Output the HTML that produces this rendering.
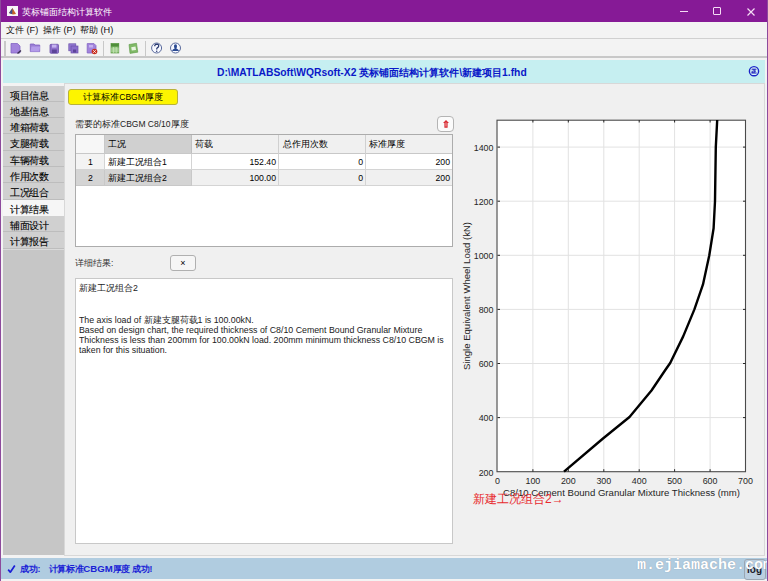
<!DOCTYPE html>
<html><head><meta charset="utf-8">
<style>
*{margin:0;padding:0;box-sizing:border-box}
html,body{width:768px;height:581px;overflow:hidden;background:#f0f0f0;font-family:"Liberation Sans",sans-serif;font-size:11px;color:#000}
.a{position:absolute;white-space:nowrap}
#win{position:absolute;left:0;top:0;width:768px;height:581px;background:#f3f3f3}
#bl{left:0;top:0;width:1px;height:581px;background:#8d4a9c}
#br{left:767px;top:0;width:1px;height:581px;background:#8d4a9c}
#title{left:0;top:0;width:768px;height:22px;background:#861a96;color:#fff;font-size:10px}
#menu{left:1px;top:22px;width:766px;height:16px;background:#f3f3f3;font-size:9.2px;color:#111}
#tool{left:1px;top:38px;width:766px;height:20px;background:#f3f3f3;border-top:1px solid #d0d0d0;border-bottom:2px solid #c8c8c8}
#path{left:3px;top:60px;width:762px;height:23px;background:#c6eff1;color:#0a18c8;font-weight:bold;font-size:10.3px}
#main{left:64px;top:83px;width:701px;height:473px;background:#f0f0f0;border:1px solid #d8d8d8}
#nav{left:3px;top:85.6px;width:61px;height:469.6px;background:#c6c6c6}
.ni{position:absolute;left:0;width:61px;height:16.3px;background:#d0d0d0;border-bottom:1px solid #bdbdbd;box-shadow:0 1px 0 #dadada;font-size:9.9px;letter-spacing:-0.3px;padding-left:7px;line-height:20.8px;color:#000;-webkit-text-stroke:0.1px #000;white-space:nowrap}
#status{left:1px;top:558px;width:766px;height:21px;background:#b0cce0;color:#1a1fd6;font-size:9.5px}
.ic{position:absolute;top:43px;width:10px;height:10px}
table{border-collapse:collapse}
</style></head><body>
<div id="win">
<div id="title" class="a">
 <div class="a" style="left:7px;top:6px;width:11px;height:10px;background:#f8f4fa"></div>
 <svg class="a" style="left:7px;top:6px" width="11" height="10" viewBox="0 0 11 10"><path d="M2 7 L5.5 2 L9 8 L6 8.5 Z" fill="#c8602a"/><path d="M2 7 L5.5 2 L5.2 8.2 Z" fill="#3b4f8c"/></svg>
 <div class="a" style="left:22px;top:6px;line-height:12px;font-size:8.8px">英标铺面结构计算软件</div>
 <div class="a" style="left:680px;top:10.5px;width:8px;height:1.2px;background:#f4dcf4"></div>
 <div class="a" style="left:713px;top:7px;width:8px;height:8px;border:1.2px solid #f4dcf4;border-radius:1px"></div>
 <svg class="a" style="left:746.5px;top:7.5px" width="8" height="8" viewBox="0 0 8 8"><path d="M0.5 0.5 L7.5 7.5 M7.5 0.5 L0.5 7.5" stroke="#f4dcf4" stroke-width="1.2"/></svg>
</div>
<div id="menu" class="a">
 <div class="a" style="left:5px;top:2px;line-height:12px">文件 (F)</div>
 <div class="a" style="left:42px;top:2px;line-height:12px">操作 (P)</div>
 <div class="a" style="left:79px;top:2px;line-height:12px">帮助 (H)</div>
</div>
<div id="tool" class="a">
 <div class="a" style="left:3px;top:2px;width:2px;height:15px;background:#c8c8c8"></div>
 <div class="a" style="left:102px;top:2px;width:1px;height:15px;background:#c8c8c8"></div>
 <div class="a" style="left:144px;top:2px;width:1px;height:15px;background:#c8c8c8"></div>
</div>
<!-- toolbar icons -->
<svg class="a" style="left:0px;top:38px" width="200" height="20" viewBox="0 38 200 20">
 <path d="M11 43.5 H17.5 L20 46 V53 H11 Z" fill="#a283dc" stroke="#8466c4" stroke-width="0.8"/>
 <path d="M17.5 53.5 L21 50.5" stroke="#3a3050" stroke-width="1.4"/>
 <path d="M30.3 44 H34 L35 45 H39.7 V51.6 H30.3 Z" fill="#9a7ed6" stroke="#7d60c0" stroke-width="0.8"/>
 <path d="M31.5 46.5 H40.2 L39.2 51.6 H30.5 Z" fill="#b49cea"/>
 <rect x="50" y="44.3" width="8.5" height="9" rx="1" fill="#8e70cc" stroke="#6a50a8" stroke-width="0.8"/>
 <rect x="52" y="44.6" width="4.5" height="3" fill="#c4b2f0"/><rect x="51.8" y="49.5" width="5" height="3.5" fill="#5c4498"/>
 <rect x="68.8" y="43.8" width="7" height="7" fill="#9277d2" stroke="#6e56ac" stroke-width="0.7"/>
 <rect x="71" y="46" width="7" height="7" fill="#8a6ecc" stroke="#6a50a8" stroke-width="0.7"/>
 <rect x="73" y="49.5" width="3.2" height="3" fill="#5c4498"/>
 <path d="M87.2 43.6 H94 L96 45.6 V53 H87.2 Z" fill="#a283dc" stroke="#8466c4" stroke-width="0.8"/>
 <rect x="89" y="45" width="4" height="2.5" fill="#c4b2f0"/>
 <circle cx="94.5" cy="51.5" r="2.8" fill="#c83020"/><path d="M93.2 50.2 L95.8 52.8 M95.8 50.2 L93.2 52.8" stroke="#fff" stroke-width="0.8"/>
 <rect x="111" y="43.6" width="7.8" height="9.4" fill="#8fc47a" stroke="#5e9a48" stroke-width="0.7"/>
 <rect x="111" y="43.6" width="7.8" height="3" fill="#4f8e3a"/>
 <path d="M113.6 47 V53 M116.2 47 V53 M111 49 H118.8 M111 51 H118.8" stroke="#d4ecc8" stroke-width="0.6"/>
 <path d="M129 44.5 L136.5 43.3 L137.8 52.2 L130 53.4 Z" fill="#7fb866" stroke="#5e9a48" stroke-width="0.6"/>
 <path d="M131.2 47.2 L135.5 46.6 L136 50 L131.8 50.6 Z" fill="#e8f4e0"/>
 <circle cx="156.6" cy="48" r="5" fill="#f6f8ff" stroke="#5a6a9c" stroke-width="1"/>
 <path d="M154.7 46.2 Q154.8 44.1 156.8 44.1 Q158.8 44.2 158.7 46 Q158.6 47.2 157.2 47.9 Q156.7 48.3 156.7 49.4" fill="none" stroke="#2a3a70" stroke-width="1.3"/><circle cx="156.7" cy="51.3" r="0.75" fill="#2a3a70"/>
 <circle cx="175.5" cy="48" r="5" fill="#f6f8ff" stroke="#5a6a9c" stroke-width="1"/>
 <path d="M175.5 44.2 Q177 44.2 177 46 Q177 47.5 176.3 48.6 Q178.6 49.2 179 51 H172 Q172.4 49.2 174.7 48.6 Q174 47.5 174 46 Q174 44.2 175.5 44.2 Z" fill="#2a4a92"/>
</svg>
<div id="path" class="a">
 <div class="a" style="left:214px;top:6.5px;line-height:12px">D:\MATLABSoft\WQRsoft-X2 英标铺面结构计算软件\新建项目1.fhd</div>
 <svg class="a" style="left:745px;top:5px" width="12" height="12" viewBox="0 0 12 12"><circle cx="6" cy="6.2" r="4.6" fill="#fff" fill-opacity="0.3" stroke="#1a22c8" stroke-width="1.4"/><path d="M3.6 4.2 H8.4 M6 4.2 V8 M6 6.1 H8 M4.2 5.8 V8 M3.4 8 H8.6" stroke="#1010b8" stroke-width="1"/></svg>
</div>
<div id="main" class="a"></div>
<div id="nav" class="a">
 <div class="ni" style="top:0">项目信息</div>
 <div class="ni" style="top:16.3px">地基信息</div>
 <div class="ni" style="top:32.6px">堆箱荷载</div>
 <div class="ni" style="top:48.9px">支腿荷载</div>
 <div class="ni" style="top:65.2px">车辆荷载</div>
 <div class="ni" style="top:81.5px">作用次数</div>
 <div class="ni" style="top:97.8px">工况组合</div>
 <div class="ni" style="top:114.1px;background:#f6f6f6;border-bottom-color:#f6f6f6">计算结果</div>
 <div class="ni" style="top:130.4px">辅面设计</div>
 <div class="ni" style="top:146.7px">计算报告</div>
</div>
<!-- yellow button -->
<div class="a" style="left:68px;top:89px;width:110px;height:16px;background:#fdf500;border:1px solid #b8b23a;border-radius:3px;font-size:8.5px;text-align:center;line-height:14px">计算标准CBGM厚度</div>
<div class="a" style="left:75px;top:119px;font-size:8.5px;line-height:11px;color:#222">需要的标准CBGM C8/10厚度</div>
<!-- red up button -->
<div class="a" style="left:437px;top:116px;width:17px;height:16px;background:#fbfbfb;border:1px solid #b4b4b4;border-radius:4px"></div>
<svg class="a" style="left:442px;top:119px" width="8" height="10" viewBox="0 0 8 10"><path d="M4 1 L7 4 H5.6 V8.8 H2.4 V4 H1 Z" fill="#d82830"/><path d="M4 3.5 V7.5" stroke="#f6c0c0" stroke-width="0.9"/></svg>
<!-- table -->
<div class="a" style="left:75px;top:134px;width:378px;height:113px;background:#fff;border:1px solid #acacac"></div>
<div class="a" style="left:76px;top:135px;width:376px;height:19px;background:#f0f0f0;border-bottom:1px solid #c8c8c8"></div>
<div class="a" style="left:76px;top:135px;width:29px;height:18px;background:#f7f7f7;border-right:1px solid #c8c8c8"></div>
<div class="a" style="left:105px;top:135px;width:87px;height:18px;background:#d0d0d0;border-right:1px solid #c0c0c0"></div>
<div class="a" style="left:192px;top:135px;width:87px;height:19px;border-right:1px solid #d0d0d0"></div>
<div class="a" style="left:279px;top:135px;width:87px;height:19px;border-right:1px solid #d0d0d0"></div>
<!-- row 1 -->
<div class="a" style="left:76px;top:154px;width:29px;height:16px;background:#f3f3f3;border-bottom:1px solid #d4d4d4;border-right:1px solid #d4d4d4"></div>
<div class="a" style="left:105px;top:154px;width:87px;height:16px;background:#fff;border-bottom:1px solid #d4d4d4;border-right:1px solid #d4d4d4"></div>
<div class="a" style="left:192px;top:154px;width:87px;height:16px;background:#fff;border-bottom:1px solid #d4d4d4;border-right:1px solid #d4d4d4"></div>
<div class="a" style="left:279px;top:154px;width:87px;height:16px;background:#fff;border-bottom:1px solid #d4d4d4;border-right:1px solid #d4d4d4"></div>
<div class="a" style="left:366px;top:154px;width:86px;height:16px;background:#fff;border-bottom:1px solid #d4d4d4"></div>
<!-- row 2 -->
<div class="a" style="left:76px;top:170px;width:29px;height:16px;background:#d4d4d4;border-bottom:1px solid #c8c8c8;border-right:1px solid #c8c8c8"></div>
<div class="a" style="left:105px;top:170px;width:87px;height:16px;background:#d4d4d4;border-bottom:1px solid #c8c8c8;border-right:1px solid #c8c8c8"></div>
<div class="a" style="left:192px;top:170px;width:87px;height:16px;background:#f0f0f0;border-bottom:1px solid #d4d4d4;border-right:1px solid #d4d4d4"></div>
<div class="a" style="left:279px;top:170px;width:87px;height:16px;background:#f0f0f0;border-bottom:1px solid #d4d4d4;border-right:1px solid #d4d4d4"></div>
<div class="a" style="left:366px;top:170px;width:86px;height:16px;background:#f0f0f0;border-bottom:1px solid #d4d4d4"></div>
<div class="a" style="font-size:8.7px;line-height:12px;color:#000">
 <div class="a" style="left:108px;top:138px">工况</div>
 <div class="a" style="left:195px;top:138px">荷载</div>
 <div class="a" style="left:283px;top:138px">总作用次数</div>
 <div class="a" style="left:369px;top:138px">标准厚度</div>
 <div class="a" style="left:88px;top:156px">1</div>
 <div class="a" style="left:108px;top:156px">新建工况组合1</div>
 <div class="a" style="left:192px;top:156px;width:84px;text-align:right">152.40</div>
 <div class="a" style="left:279px;top:156px;width:84px;text-align:right">0</div>
 <div class="a" style="left:366px;top:156px;width:84px;text-align:right">200</div>
 <div class="a" style="left:88px;top:172px">2</div>
 <div class="a" style="left:108px;top:172px">新建工况组合2</div>
 <div class="a" style="left:192px;top:172px;width:84px;text-align:right">100.00</div>
 <div class="a" style="left:279px;top:172px;width:84px;text-align:right">0</div>
 <div class="a" style="left:366px;top:172px;width:84px;text-align:right">200</div>
</div>
<!-- details -->
<div class="a" style="left:75px;top:257px;font-size:8.5px;line-height:12px;color:#333">详细结果:</div>
<div class="a" style="left:170px;top:255px;width:26px;height:16px;background:#f6f6f6;border:1px solid #b0b0b0;border-radius:3px;font-size:9px;text-align:center;line-height:14px">×</div>
<div class="a" style="left:75px;top:278px;width:378px;height:266px;background:#fff;border:1px solid #c8c8c8"></div>
<div class="a" style="left:79px;top:282.5px;font-size:8.8px;line-height:10px;color:#222">新建工况组合2</div>
<div class="a" style="left:79px;top:314.5px;width:370px;font-size:8.8px;line-height:10px;color:#222">
 The axis load of 新建支腿荷载1 is 100.00kN.<br>Based on design chart, the required thickness of C8/10 Cement Bound Granular Mixture<br>Thickness is less than 200mm for 100.00kN load. 200mm minimum thickness C8/10 CBGM is<br>taken for this situation.
</div>
<!-- chart -->
<svg class="a" style="left:455px;top:100px" width="310" height="410" viewBox="455 100 310 410" font-family="Liberation Sans" font-size="8.9" fill="#262626">
 <rect x="497.5" y="120" width="248" height="351.7" fill="#fff"/>
 <g stroke="#e2e2e2" stroke-width="1">
  <path d="M532.9 120V471.7M568.3 120V471.7M603.8 120V471.7M639.2 120V471.7M674.6 120V471.7M710.1 120V471.7"/>
  <path d="M497.5 147.1H745.5M497.5 201.2H745.5M497.5 255.3H745.5M497.5 309.4H745.5M497.5 363.5H745.5M497.5 417.6H745.5"/>
 </g>
 <rect x="497" y="120.2" width="248.5" height="351.5" fill="none" stroke="#4a4a4a" stroke-width="1.1"/>
 <g stroke="#262626" stroke-width="1">
  <path d="M532.9 471.7v-2.5M568.3 471.7v-2.5M603.8 471.7v-2.5M639.2 471.7v-2.5M674.6 471.7v-2.5M710.1 471.7v-2.5"/>
  <path d="M532.9 120v2.5M568.3 120v2.5M603.8 120v2.5M639.2 120v2.5M674.6 120v2.5M710.1 120v2.5"/>
  <path d="M497.5 147.1h2.5M497.5 201.2h2.5M497.5 255.3h2.5M497.5 309.4h2.5M497.5 363.5h2.5M497.5 417.6h2.5"/>
  <path d="M745.5 147.1h-2.5M745.5 201.2h-2.5M745.5 255.3h-2.5M745.5 309.4h-2.5M745.5 363.5h-2.5M745.5 417.6h-2.5"/>
 </g>
 <polyline fill="none" stroke="#000" stroke-width="2.4" stroke-linejoin="round" points="564,471.7 603,438.5 629.5,417 651.5,390.5 665.3,370 670.2,363 683.2,336.4 694.4,309.4 703,284.4 709.3,255.3 713.6,228.2 715,201.2 715.8,147.1 717.2,120"/>
 <g text-anchor="end">
  <text x="493.5" y="151">1400</text><text x="493.5" y="205">1200</text><text x="493.5" y="259">1000</text>
  <text x="493.5" y="313">800</text><text x="493.5" y="367">600</text><text x="493.5" y="421">400</text><text x="493.5" y="475.5">200</text>
 </g>
 <g text-anchor="middle">
  <text x="497.5" y="483.8">0</text><text x="532.9" y="483.8">100</text><text x="568.3" y="483.8">200</text><text x="603.8" y="483.8">300</text>
  <text x="639.2" y="483.8">400</text><text x="674.6" y="483.8">500</text><text x="710.1" y="483.8">600</text><text x="745.5" y="483.8">700</text>
  <text x="621.5" y="496" font-size="9.6">C8/10 Cement Bound Granular Mixture Thickness (mm)</text>
  <text transform="translate(470 296) rotate(-90)" font-size="9.55">Single Equivalent Wheel Load (kN)</text>
 </g>
</svg>
<div class="a" style="left:473px;top:492px;font-size:12px;line-height:15px;color:#e82a2e">新建工况组合2<b>→</b></div>
<div id="nav2"></div>
<div id="status" class="a">
 <svg class="a" style="left:6px;top:6px" width="9" height="10" viewBox="0 0 9 10"><path d="M1.2 5.6 L3.3 8.2 L7.8 1.5" fill="none" stroke="#1a1fd6" stroke-width="1.7" stroke-linejoin="round"/></svg><div class="a" style="left:19px;top:5px;font-weight:bold;line-height:12px;font-size:8.8px;letter-spacing:-0.2px">成功:</div><div class="a" style="left:47.5px;top:5px;font-weight:bold;line-height:12px;font-size:8.6px;letter-spacing:-0.3px">计算标准<span style="font-size:9.6px;letter-spacing:0">CBGM</span>厚度 成功!</div>
  <div class="a" style="left:742.5px;top:0.5px;width:22px;height:21px;background:#bccfe0;border:1px solid #9aa6b2;border-radius:3px;font-size:10px;line-height:19px;text-align:center;color:#1a1a2a;font-weight:bold">log</div>
<div class="a" style="left:636px;top:-1px;font-family:'Liberation Mono',monospace;font-size:15px;line-height:18px;color:#fff;font-weight:bold;text-shadow:0 0 1px #8090a0">m.ejiamache.com</div>
</div>
<div id="bl" class="a"></div><div id="br" class="a"></div>
</div>
</body></html>
